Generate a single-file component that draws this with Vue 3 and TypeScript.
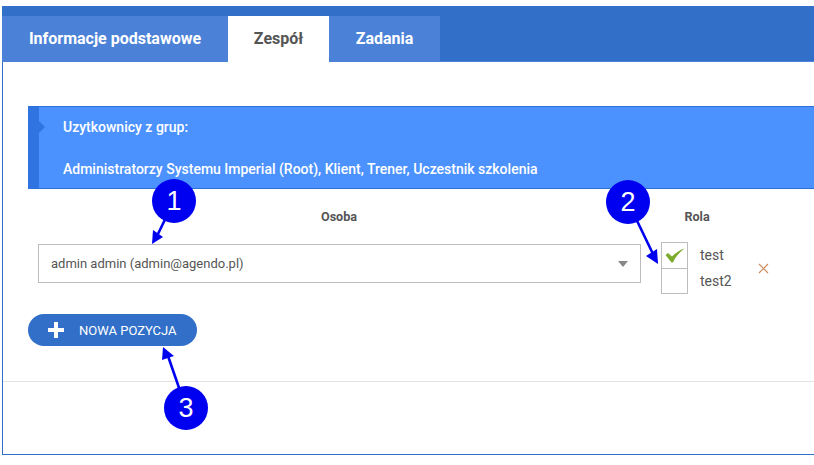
<script setup lang="ts">
interface Tab {
  label: string
  active?: boolean
}

interface Callout {
  label: string
  cx: number
  cy: number
  x2: number
  y2: number
  tip: string
}

const tabs: Tab[] = [
  { label: 'Informacje podstawowe' },
  { label: 'Zespół', active: true },
  { label: 'Zadania' },
]

const roles = [
  { label: 'test', checked: true },
  { label: 'test2', checked: false },
]

// annotation pins drawn over the screenshot
const callouts: Callout[] = [
  { label: '1', cx: 174, cy: 201, x2: 157, y2: 236, tip: '152,244 163,237 153,230' },
  { label: '2', cx: 628, cy: 202, x2: 653, y2: 254, tip: '658,264 646,256 657,249' },
  { label: '3', cx: 186, cy: 408, x2: 168, y2: 356, tip: '163,347 162,360 174,356' },
]
</script>

<template>
  <div class="page">
    <div class="panel">
      <div class="tabs">
        <div v-for="tab in tabs" :key="tab.label" class="tab" :class="{ active: tab.active }">
          {{ tab.label }}
        </div>
      </div>

      <div class="content">
        <div class="notice">
          <p>Uzytkownicy z grup:</p>
          <p>Administratorzy Systemu Imperial (Root), Klient, Trener, Uczestnik szkolenia</p>
        </div>

        <div class="team-head">
          <span class="col-person">Osoba</span>
          <span class="col-role">Rola</span>
        </div>

        <div class="team-row">
          <div class="select">
            <span>admin admin (admin@agendo.pl)</span>
            <span class="caret"></span>
          </div>
          <div class="roles">
            <div v-for="role in roles" :key="role.label" class="role">
              <span class="check">
                <svg v-if="role.checked" width="20" height="15" viewBox="0 0 20 15">
                  <path d="M0.5 7 L3 5 L7 8.5 C10 5.5 14.5 2 19.5 0.5 C14.5 4 10.5 9 8 14.5 L6.5 14.5 Z" fill="#7cab2e" />
                </svg>
              </span>
              <span class="role-label">{{ role.label }}</span>
            </div>
          </div>
          <svg class="remove" width="11" height="11" viewBox="0 0 11 11">
            <path d="M1 1 L10 10 M10 1 L1 10" stroke="#cf8a5a" stroke-width="1.1" fill="none" />
          </svg>
        </div>

        <button type="button" class="add-btn">
          <svg width="16" height="16" viewBox="0 0 16 16">
            <path d="M6 0 H10 V6 H16 V10 H10 V16 H6 V10 H0 V6 H6 Z" fill="#fff" />
          </svg>
          <span>NOWA POZYCJA</span>
        </button>
      </div>

      <div class="footer"></div>
    </div>

    <svg class="overlay" width="814" height="465" viewBox="0 0 814 465">
      <g v-for="c in callouts" :key="c.label">
        <line :x1="c.cx" :y1="c.cy" :x2="c.x2" :y2="c.y2" stroke="#0000f0" stroke-width="2.6" />
        <polygon :points="c.tip" fill="#0000f0" />
        <circle :cx="c.cx" :cy="c.cy" r="22" fill="#0000f0" />
        <text :x="c.cx" :y="c.cy + 9" text-anchor="middle" class="pin-text">{{ c.label }}</text>
      </g>
    </svg>
  </div>
</template>

<style scoped>
.page {
  position: relative;
  width: 814px;
  height: 465px;
  overflow: hidden;
  background: #fff;
  font-family: Roboto, "Liberation Sans", sans-serif;
  color: #555;
}

.panel {
  box-sizing: border-box;
  width: 812px;
  height: 449px;
  margin: 6px 0 0 2px;
  border-left: 1px solid #2f6fc9;
  border-bottom: 1px solid #2f6fc9;
}

.tabs {
  display: flex;
  box-sizing: border-box;
  height: 56px;
  margin-left: -1px;
  padding-top: 10px;
  background: #316fc8;
  border-bottom: 1px solid #4c83d8;
}

.tab {
  box-sizing: border-box;
  height: 46px;
  line-height: 46px;
  background: #4b82d8;
  color: #fff;
  font-size: 16px;
  font-weight: 700;
  text-align: center;
}

.tab:first-child {
  width: 226px;
}

.tab:nth-child(2) {
  width: 101px;
}

.tab:nth-child(3) {
  width: 111px;
}

.tab.active {
  background: #fff;
  color: #555;
}

.content {
  padding: 44px 0 0 25px;
}

.notice {
  position: relative;
  box-sizing: border-box;
  height: 83px;
  padding: 12px 0 0 24px;
  background: #4c92ff;
  border-top: 1px solid #2f6fd6;
  border-bottom: 1px solid #2f6fd6;
  border-left: 11px solid #2f74e0;
  color: #fff;
  font-size: 14px;
  font-weight: 500;
}

/* little notch on the stripe */
.notice::before {
  content: "";
  position: absolute;
  left: 0;
  top: 14px;
  border-left: 6px solid #2f74e0;
  border-top: 6px solid transparent;
  border-bottom: 6px solid transparent;
}

.notice p {
  margin: 0 0 26px;
  line-height: 16px;
}

.team-head {
  display: flex;
  box-sizing: border-box;
  height: 55px;
  align-items: center;
  font-size: 12.6px;
  font-weight: 700;
}

.col-person {
  width: 622px;
  text-align: center;
}

.col-role {
  width: 70px;
  padding-left: 12px;
  text-align: center;
}

.team-row {
  display: flex;
  align-items: flex-start;
  height: 52px;
  margin-top: -2px;
  padding-left: 10px;
}

.select {
  display: flex;
  align-items: center;
  justify-content: space-between;
  box-sizing: border-box;
  width: 603px;
  height: 39px;
  margin-top: 2px;
  padding: 0 12px;
  border: 1px solid #bdbdbd;
  font-size: 13px;
}

.caret {
  border-left: 5px solid transparent;
  border-right: 5px solid transparent;
  border-top: 6px solid #888;
}

.roles {
  margin-left: 20px;
  width: 102px;
}

.role {
  display: flex;
  align-items: center;
  height: 26px;
}

.check {
  display: flex;
  align-items: center;
  justify-content: center;
  box-sizing: border-box;
  width: 27px;
  height: 27px;
  margin-bottom: -1px;
  border: 1px solid #bdbdbd;
}

.role:last-child .check {
  height: 26px;
  margin-bottom: 0;
}

.role-label {
  margin-left: 12px;
  font-size: 14px;
}

.remove {
  margin: 21px 0 0 -5px;
}

.add-btn {
  display: flex;
  align-items: center;
  gap: 15px;
  box-sizing: border-box;
  width: 169px;
  height: 32px;
  margin-top: 20px;
  padding: 0 0 0 20px;
  background: #316fc8;
  border: none;
  border-radius: 16px;
  color: #fff;
  font-family: inherit;
  font-size: 13px;
  font-weight: 400;
}

.footer {
  margin-top: 35px;
  border-top: 1px solid #e3e3e3;
}

.overlay {
  position: absolute;
  left: 0;
  top: 0;
}

.pin-text {
  fill: #fff;
  font-family: "Liberation Sans", Arial, sans-serif;
  font-size: 27px;
}
</style>
